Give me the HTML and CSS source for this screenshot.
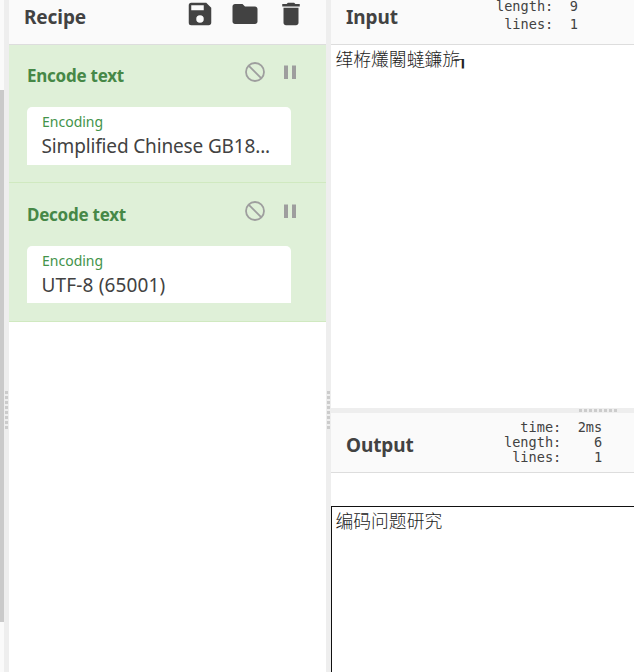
FILE: index.html
```html
<!DOCTYPE html>
<html lang="zh-CN">
<head>
<meta charset="utf-8">
<title>Recipe</title>
<link rel="stylesheet" href="styles.css">
</head>
<body>
<svg class="defs" width="0" height="0">
  <symbol id="save" viewBox="0 0 24 24"><path d="M17 3H5a2 2 0 0 0-2 2v14a2 2 0 0 0 2 2h14c1.100 0 2-.9 2-2V7l-4-4zm-5 16a3 3 0 1 1 0-6 3 3 0 0 1 0 6zm3-10H5V5h10v4z"/></symbol>
  <symbol id="folder" viewBox="0 0 24 24"><path d="M10 4H4c-1.100 0-2 .9-2 2v12c0 1.100.9 2 2 2h16c1.100 0 2-.9 2-2V8c0-1.100-.9-2-2-2h-8l-2-2z"/></symbol>
  <symbol id="trash" viewBox="0 0 24 24"><path d="M6 19c0 1.100.9 2 2 2h8c1.100 0 2-.9 2-2V7H6v12zM19 4h-3.500l-1-1h-5l-1 1H5v2h14V4z"/></symbol>
  <symbol id="disable" viewBox="0 0 24 24"><g fill="none" stroke="currentColor" stroke-width="1.800"><circle cx="12" cy="12" r="9"/><path d="M5.600 5.600l12.800 12.800"/></g></symbol>
  <symbol id="pause" viewBox="0 0 24 24"><path d="M6 19h4V5.500H6zM14 5.500V19h4V5.500z"/></symbol>
</svg>
<div class="app">
  <div class="scroll"><div class="thumb"></div></div>
  <div class="gutter"><i class="grip"></i></div>
  <section class="recipe">
    <header class="title">
      <h2>Recipe</h2>
      <div class="actions"><svg><use href="#save"/></svg><svg><use href="#folder"/></svg><svg class="trash"><use href="#trash"/></svg></div>
    </header>
    <article class="op">
      <div class="op-head"><h3>Encode text</h3><svg><use href="#disable"/></svg><svg class="pause"><use href="#pause"/></svg></div>
      <div class="field"><label>Encoding</label><span class="value">Simplified Chinese GB18...</span></div>
    </article>
    <article class="op">
      <div class="op-head"><h3>Decode text</h3><svg><use href="#disable"/></svg><svg class="pause"><use href="#pause"/></svg></div>
      <div class="field"><label>Encoding</label><span class="value utf">UTF-8 (65001)</span></div>
    </article>
  </section>
  <div class="gutter"><i class="grip"></i></div>
  <main class="io">
    <header class="title in">
      <h2>Input</h2>
      <pre class="stats">length:  9
 lines:  1</pre>
    </header>
    <div class="text input">缂栫爜闂蟽鐮旂<span class="corner">┒</span></div>
    <div class="hgutter"><i class="hgrip"></i></div>
    <header class="title out">
      <h2>Output</h2>
      <pre class="stats">  time:  2ms
length:    6
 lines:    1</pre>
    </header>
    <div class="text output">编码问题研究</div>
  </main>
</div>
</body>
</html>
```
FILE: styles.css
```css
* { box-sizing: border-box; }
body { margin: 0; height: 672px; overflow: hidden; background: #fff; color: #424242; font-family: "Noto Sans", "Open Sans", sans-serif; }
.defs { position: absolute; }
svg { fill: currentColor; display: block; }
h2, h3, pre { margin: 0; white-space: pre; }
.app { display: flex; height: 672px; }
.scroll { width: 4px; background: #fafafa; padding-top: 90px; }
.thumb { height: 532px; background: #cacaca; }
.gutter { width: 5px; background: #eee; padding-top: 391px; }
.grip { display: block; width: 3px; height: 38px; margin-left: 1px; background: repeating-linear-gradient(#ccc 0 3px, transparent 3px 5px); }
.recipe { width: 317px; }
.title { display: flex; background: #fafafa; border-bottom: 1px solid #ddd; height: 45px; }
h2 { font-size: 19px; line-height: 26px; font-weight: 700; letter-spacing: -.1px; }
.recipe h2 { padding: 4px 0 0 15px; width: 176px; }
.actions { display: flex; gap: 15px; }
.actions svg { width: 30px; height: 30px; margin-top: -1px; }
.actions .trash { margin-left: 1px; }
.op { height: 138px; background: #dff0d8; border-bottom: 1px solid #d0e9c0; padding: 12px 18px 0; }
.op + .op { height: 139px; padding-top: 13px; }
.op-head { display: flex; height: 50px; color: #468847; }
h3 { font-size: 17px; line-height: 24px; width: 216px; padding-top: 7px; letter-spacing: -.25px; }
.op-head svg { width: 24px; height: 24px; margin-top: 2.500px; color: #9e9e9e; }
.op-head .pause { margin-left: 11px; }
.field { width: 264px; height: 58px; background: #fff; border-radius: 5px 5px 0 0; padding: 4px 15px; }
.op + .op .field { height: 57px; }
label { display: block; font-size: 14px; line-height: 21px; color: #43934a; }
.value { display: block; font-size: 19px; line-height: 28px; white-space: nowrap; letter-spacing: -.15px; margin-left: -.5px; }
.value.utf { letter-spacing: .15px; }
.io { flex: 1; }
.io h2 { padding-left: 15px; width: 165px; }
.in h2 { padding-top: 4px; }
.stats { font: 13.600px/18px "DejaVu Sans Mono", monospace; margin-top: -3px; }
.out h2 { padding-top: 19px; width: 173px; }
.out .stats { line-height: 15px; margin-top: 7px; }
.title.out { height: 60px; }
.text { font: 300 17.800px/26px "Noto Sans CJK SC", sans-serif; padding: 0 4.500px; color: #222; }
.input { height: 363px; }
.corner { margin-left: -6px; font-weight: 500; }
.hgutter { height: 5px; background: #eee; padding: 1px 0 0 248px; }
.hgrip { display: block; width: 38px; height: 3px; background: repeating-linear-gradient(90deg, #ccc 0 3px, transparent 3px 5px); }
.output { margin-top: 33px; height: 170px; border: 1px solid #111; border-right: 0; padding: 0 3.500px; }
```
